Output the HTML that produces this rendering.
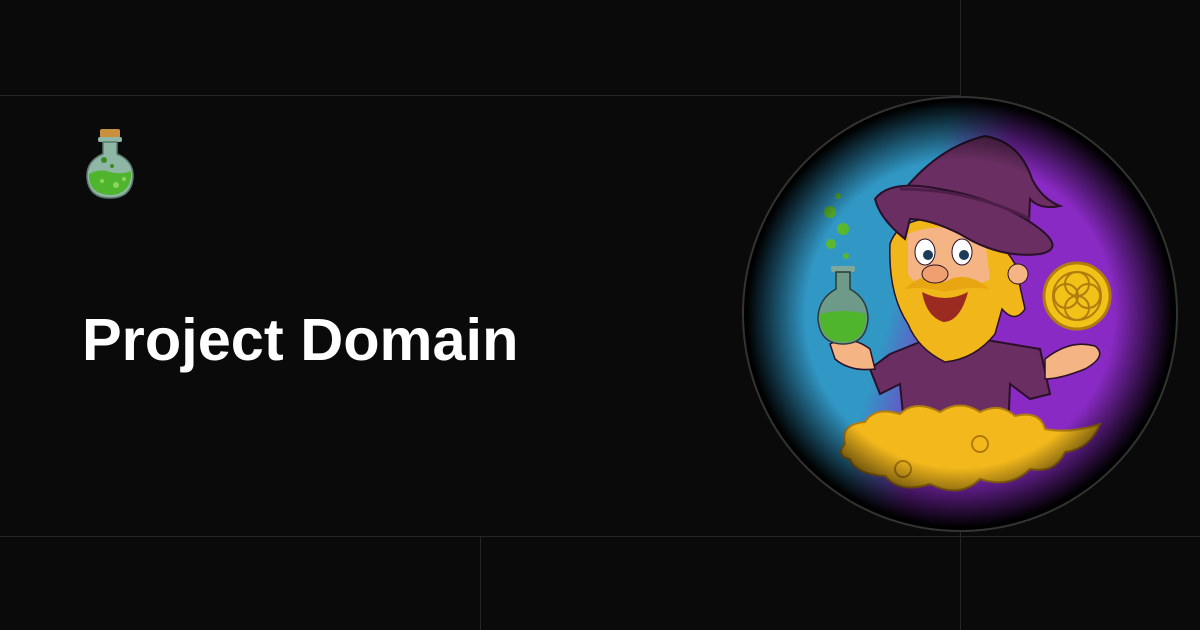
<!DOCTYPE html>
<html><head><style>
html,body{margin:0;padding:0;background:#0a0a0a;width:1200px;height:630px;overflow:hidden;position:relative;font-family:"Liberation Sans",sans-serif}
.l{position:absolute;background:#262626}
h1{position:absolute;left:82px;top:306px;margin:0;color:#fff;font-size:59.5px;font-weight:bold;line-height:68px}
</style></head><body>
<div class="l" style="left:0;top:95px;width:960px;height:1px"></div>
<div class="l" style="left:0;top:536px;width:1200px;height:1px"></div>
<div class="l" style="left:960px;top:0;width:1px;height:630px"></div>
<div class="l" style="left:480px;top:536px;width:1px;height:94px"></div>

<svg style="position:absolute;left:82px;top:126px" width="56" height="76" viewBox="0 0 56 76">
<rect x="18" y="3" width="20" height="9" rx="2" fill="#c8903c"/>
<rect x="16" y="11" width="24" height="5" rx="2" fill="#8fb7a6"/>
<path d="M21 16 L21 28 Q4 35 5 52 Q7 72 28 72 Q49 72 51 52 Q52 35 35 28 L35 16Z" fill="#8fb7a6" stroke="#5b7b6e" stroke-width="1.5"/>
<path d="M7 48 Q18 42 28 46 Q40 49 49 45 Q50 68 28 69 Q6 68 7 48Z" fill="#4fb52c"/>
<circle cx="22" cy="34" r="3" fill="#3d8a22"/><circle cx="30" cy="40" r="2" fill="#3d8a22"/>
<circle cx="20" cy="55" r="2" fill="#8cd45a"/><circle cx="34" cy="59" r="3" fill="#8cd45a"/><circle cx="42" cy="53" r="2" fill="#8cd45a"/>
</svg>

<h1>Project Domain</h1>

<svg style="position:absolute;left:740px;top:94px" width="440" height="440" viewBox="0 0 440 440">
<defs>
<radialGradient id="v" cx="50%" cy="50%" r="50%">
<stop offset="0.7" stop-color="#000" stop-opacity="0"/>
<stop offset="0.97" stop-color="#000" stop-opacity="1"/>
</radialGradient>
<linearGradient id="bg" x1="0" y1="0" x2="1" y2="0.3">
<stop offset="0.45" stop-color="#3198c6"/><stop offset="0.6" stop-color="#8a2ac4"/>
</linearGradient>
<clipPath id="c"><circle cx="220" cy="220" r="217"/></clipPath>
</defs>
<g clip-path="url(#c)">
<rect width="440" height="440" fill="url(#bg)"/>
<path d="M150 260 L200 240 L240 245 L300 255 L310 300 L290 305 L270 290 L268 340 L165 340 L160 290 L140 300 L130 275Z" fill="#6a2e63" stroke="#2a1028" stroke-width="2"/>
<path d="M90 250 Q110 240 130 255 L135 275 Q110 278 95 265Z" fill="#f4b484" stroke="#2a1028" stroke-width="1.5"/>
<path d="M305 265 Q330 245 355 252 Q368 262 345 275 Q320 285 305 285Z" fill="#f4b484" stroke="#2a1028" stroke-width="1.5"/>
<rect x="91" y="172" width="24" height="6" rx="2" fill="#7fa89a"/>
<path d="M96 178 L96 195 Q78 205 78 225 Q80 250 103 250 Q126 250 128 225 Q128 205 110 195 L110 178Z" fill="#6e9a8a" stroke="#2a3a34" stroke-width="1.5"/>
<path d="M80 220 Q103 214 126 220 Q126 248 103 248 Q80 248 80 220Z" fill="#4fb52c"/>
<circle cx="90" cy="118" r="6" fill="#5ab82e"/><circle cx="103" cy="135" r="6" fill="#5ab82e"/><circle cx="91" cy="150" r="5" fill="#5ab82e"/><circle cx="106" cy="162" r="3" fill="#5ab82e"/><circle cx="98" cy="102" r="3" fill="#5ab82e"/>
<path d="M150 150 Q160 120 210 125 Q255 135 275 170 L285 215 Q275 230 262 215 L255 240 Q235 265 205 268 Q178 255 168 230 Q148 200 150 150Z" fill="#f1b619" stroke="#2a1028" stroke-width="1.5"/>
<path d="M168 140 Q200 125 245 145 L250 185 Q235 195 205 190 Q175 195 168 180Z" fill="#f4b484"/>
<ellipse cx="185" cy="158" rx="10" ry="13" fill="#fff" stroke="#2a1028"/><circle cx="188" cy="161" r="5" fill="#1c3a5a"/>
<ellipse cx="222" cy="158" rx="10" ry="13" fill="#fff" stroke="#2a1028"/><circle cx="224" cy="161" r="5" fill="#1c3a5a"/>
<path d="M165 195 Q185 175 205 188 Q225 175 250 195 Q230 192 205 198 Q185 192 165 195Z" fill="#e8a612"/>
<ellipse cx="195" cy="180" rx="13" ry="9" fill="#f0a070" stroke="#2a1028"/>
<path d="M182 198 Q205 210 228 198 Q220 228 203 228 Q186 222 182 198Z" fill="#9b2a20"/>
<circle cx="278" cy="180" r="10" fill="#f4b484" stroke="#2a1028"/>
<path d="M150 115 Q190 55 245 42 Q280 48 292 85 Q302 105 320 112 Q300 116 290 105 L288 150 Z" fill="#6a2e63" stroke="#2a1028" stroke-width="2"/>
<path d="M135 105 Q150 85 200 95 Q260 105 300 135 Q325 155 300 160 Q260 165 220 140 Q190 125 170 125 L165 145 Q140 125 135 105Z" fill="#6a2e63" stroke="#2a1028" stroke-width="2"/>
<path d="M160 95 Q230 95 290 125" fill="none" stroke="#4d1f48" stroke-width="3"/>
<circle cx="337" cy="202" r="33" fill="#f2c218" stroke="#b07c10" stroke-width="3"/>
<g fill="none" stroke="#b07c10" stroke-width="2"><circle cx="337" cy="190" r="12"/><circle cx="337" cy="214" r="12"/><circle cx="326" cy="202" r="12"/><circle cx="348" cy="202" r="12"/><circle cx="337" cy="202" r="24"/></g>
<path d="M105 350 Q100 330 125 328 Q135 312 160 320 Q175 305 200 318 Q220 305 240 318 Q260 308 275 322 Q300 316 305 335 Q330 340 360 330 Q350 355 325 358 Q315 380 290 375 Q270 395 240 385 Q220 405 190 390 Q160 400 145 382 Q115 380 110 365 Q95 362 105 350Z" fill="#f2b81c" stroke="#b07c10" stroke-width="2"/>
<g fill="none" stroke="#b07c10" stroke-width="2"><circle cx="163" cy="375" r="8"/><circle cx="240" cy="350" r="8"/></g>
<rect width="440" height="440" fill="url(#v)"/>
</g>
<circle cx="220" cy="220" r="217" fill="none" stroke="#333" stroke-width="2"/>
</svg>
</body></html>
